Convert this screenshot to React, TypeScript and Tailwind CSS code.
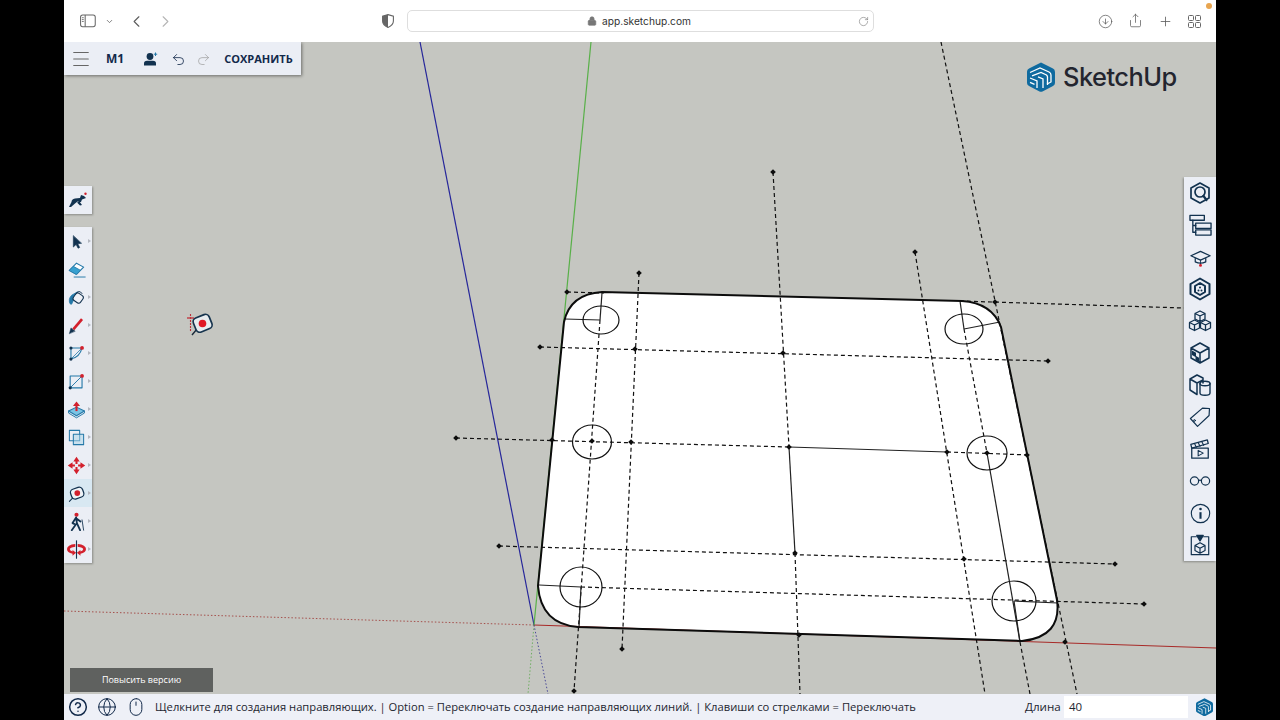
import React from "react"
import { ChevronDown, ChevronLeft, ChevronRight, CircleArrowDown, Share, Plus, RotateCw, Lock, Menu, Undo2, Redo2, CircleHelp, Globe, Mouse } from "lucide-react"

const NAVY = "#12324f"
const BLUE = "#2478a8"
const RED = "#d3202c"

type Seg = [number, number, number, number]

const GUIDES: Seg[] = [
  [567, 292, 604, 293],
  [960, 301, 1184, 308],
  [540, 347, 1048, 361],
  [456, 438, 789, 447],
  [947, 452, 1030, 455],
  [499, 546, 1115, 564],
  [581, 587, 1144, 604],
  [639, 273, 622, 649],
  [773, 172, 789, 447],
  [795, 553, 800, 694],
  [915, 252, 985, 694],
  [941, 42, 1077, 694],
  [600, 320, 574, 691],
  [964, 329, 987, 453],
  [1020, 642, 1030, 694],
]

const DOTS: [number, number][] = [
  [567, 292], [639, 273], [773, 172], [915, 252], [995, 302], [540, 347], [1048, 361], [635, 349], [783, 353],
  [456, 438], [552, 440], [592, 441], [631, 442], [789, 447], [947, 452], [987, 453], [1027, 455],
  [499, 546], [1115, 564], [795, 553], [964, 559], [1144, 604], [622, 649], [574, 691], [799, 635], [1065, 642],
]

const SOLID: Seg[] = [
  [602, 293, 600, 320], [600, 320, 565, 319],
  [960, 301, 964, 329], [964, 329, 1000, 322],
  [539, 585, 581, 587], [581, 587, 579, 627],
  [1058, 603, 1014, 601], [1014, 601, 1020, 642],
  [789, 447, 947, 452], [789, 447, 795, 553], [987, 453, 1020, 642],
]

const ELLIPSES: [number, number, number, number][] = [
  [601, 320, 18, 14], [964, 329, 19, 15], [592, 442, 19.5, 17],
  [987, 453, 20, 17], [581, 587, 21, 20], [1014, 601, 22, 20],
]

const SHAPE = "M602 292 L962 301 Q992 303 1001 327 L1057 600 Q1062 637 1022 641 L578 627 Q541 624 538 586 L564 322 Q570 294 602 292 Z"

function Drawing() {
  return (
    <svg className="absolute inset-0 w-full h-full" viewBox="64 42 1152 652">
      <line x1="64" y1="611" x2="534" y2="625" stroke="#a5504c" strokeWidth="1" strokeDasharray="1.5 2" />
      <line x1="534" y1="625" x2="528" y2="694" stroke="#6fae62" strokeWidth="1" strokeDasharray="1.5 2" />
      <line x1="534" y1="625" x2="548" y2="694" stroke="#4a4a98" strokeWidth="1" strokeDasharray="1.5 2" />
      <path d={SHAPE} fill="#ffffff" />
      <line x1="534" y1="625" x2="1216" y2="648" stroke="#a82a28" strokeWidth="1.1" />
      <line x1="420" y1="42" x2="534" y2="625" stroke="#26269a" strokeWidth="1.2" />
      <line x1="591" y1="42" x2="534" y2="625" stroke="#58b048" strokeWidth="1.2" />
      {GUIDES.map(([x1, y1, x2, y2], i) => (
        <line key={i} x1={x1} y1={y1} x2={x2} y2={y2} stroke="#111" strokeWidth="1.2" strokeDasharray="4 3" />
      ))}
      {SOLID.map(([x1, y1, x2, y2], i) => (
        <line key={i} x1={x1} y1={y1} x2={x2} y2={y2} stroke="#222" strokeWidth="1.2" />
      ))}
      {ELLIPSES.map(([cx, cy, rx, ry], i) => (
        <ellipse key={i} cx={cx} cy={cy} rx={rx} ry={ry} fill="none" stroke="#111" strokeWidth="1.2" />
      ))}
      <path d={SHAPE} fill="none" stroke="#0c0c0c" strokeWidth="2" />
      {DOTS.map(([x, y], i) => (
        <path key={i} d={`M${x} ${y - 2.8}L${x + 2.8} ${y}L${x} ${y + 2.8}L${x - 2.8} ${y}Z`} fill="#0c0c0c" />
      ))}
      <g>
        <line x1="190.5" y1="314" x2="190.5" y2="331" stroke="#c0303a" strokeWidth="1.1" strokeDasharray="2 1" />
        <line x1="187" y1="318" x2="194" y2="318" stroke="#c0303a" strokeWidth="1.3" />
        <path d="M197 329 L192 335" stroke="#1b2a3a" strokeWidth="1.4" />
        <rect x="194" y="316" width="17" height="15" rx="4" transform="rotate(-22 202 323)" fill="#e8ecef" stroke="#17344e" strokeWidth="1.7" />
        <circle cx="202.5" cy="323.5" r="3.8" fill="#e01825" />
      </g>
    </svg>
  )
}

function Logo({ size }: { size: number }) {
  return (
    <svg width={size} height={size * 1.07} viewBox="0 0 28 30">
      <path d="M14 0.5 L26 6.5 Q28 7.5 28 10 V21 Q28 23 26 24 L15.5 29.5 Q14 30 12.5 29.5 L2 24 Q0 23 0 21 V9.5 Q0 7.5 2 6.5 Z" fill="#0f6a9f" />
      <g fill="none" stroke="#ffffff" strokeWidth="1.3">
        <path d="M3 10.5 L13 6 L22 10 Q24 11 24 13 V20 L20 22" />
        <path d="M5 14 L14 10.5 L19.5 13 Q20.5 14 20.5 15 V23" />
        <path d="M3 16 L10 19 V26" />
        <path d="M3 20.5 L7.5 22.5" />
        <path d="M11 15 L16 17 V26" />
      </g>
    </svg>
  )
}

type IconProps = { children: React.ReactNode; size?: number }

function Ico({ children, size = 24 }: IconProps) {
  return (
    <svg width={size} height={size} viewBox="0 0 24 24" fill="none" stroke={NAVY} strokeWidth="1.7" strokeLinejoin="round" strokeLinecap="round">
      {children}
    </svg>
  )
}

const LEFT_TOOLS: { icon: React.ReactNode; more: boolean; active?: boolean }[] = [
  {
    more: true,
    icon: <Ico><path d="M8 5 V19 L11.5 15.7 L14 20.5 L16 19.5 L13.6 14.8 L18 14.3 Z" fill={NAVY} strokeWidth="0.8" /></Ico>,
  },
  {
    more: false,
    icon: <Ico><path d="M3 13 L12 4 L21 9 L12 18 Z" stroke={BLUE} strokeWidth="1.4" fill="#ffffff" /><path d="M3 13 L8 8 L17 13 L12 18 Z" fill="#37a0d0" stroke={BLUE} strokeWidth="1" /><path d="M9 21.5 H23" stroke={BLUE} strokeWidth="1.2" /></Ico>,
  },
  {
    more: true,
    icon: <Ico><path d="M13 5 L6 9 Q1 14 4 20 Q6 22 7 18 L9 13 Z" fill={BLUE} stroke={BLUE} strokeWidth="1" /><rect x="9" y="7" width="11" height="11" rx="3" transform="rotate(35 14 12)" fill="#eef0f6" strokeWidth="1.3" /><path d="M11 8 Q15 1 19 7" strokeWidth="1.2" /></Ico>,
  },
  {
    more: true,
    icon: <Ico><path d="M8 17 L19 4" stroke={RED} strokeWidth="3.4" strokeLinecap="butt" /><path d="M3 22 L5 15 L10 19 Z" fill={NAVY} strokeWidth="0.6" /></Ico>,
  },
  {
    more: true,
    icon: <Ico><path d="M5 5 H18 M5 5 V19" stroke={BLUE} strokeWidth="1.4" /><path d="M5 19 Q16 17 19 5" stroke={BLUE} strokeWidth="1.4" /><path d="M5 19 L19 5" stroke={BLUE} strokeWidth="1" /><circle cx="5" cy="5" r="2" fill={NAVY} stroke="none" /><circle cx="5" cy="19" r="2" fill={NAVY} stroke="none" /><circle cx="19" cy="5" r="2.4" fill={RED} stroke="none" /></Ico>,
  },
  {
    more: true,
    icon: <Ico><rect x="4" y="5" width="15" height="15" stroke={BLUE} strokeWidth="1.4" /><path d="M4 20 L19 5" stroke={BLUE} strokeWidth="1.2" /><circle cx="4" cy="20" r="2" fill={NAVY} stroke="none" /><circle cx="19" cy="5" r="2.4" fill={RED} stroke="none" /></Ico>,
  },
  {
    more: true,
    icon: <Ico><path d="M2 14 L12 9 L22 14 L12 20 Z" fill="#7cc4e4" stroke={BLUE} strokeWidth="1.4" /><path d="M2 14 V16.5 L12 22.5 L22 16.5 V14" stroke={BLUE} strokeWidth="1.2" /><path d="M12 14 V6" stroke={RED} strokeWidth="2.6" strokeLinecap="butt" /><path d="M7.5 7.5 L12 2 L16.5 7.5 Z" fill={RED} stroke="none" /></Ico>,
  },
  {
    more: true,
    icon: <Ico><rect x="3" y="3" width="13" height="13" stroke={BLUE} strokeWidth="1.3" /><rect x="8" y="8" width="13" height="13" stroke={BLUE} strokeWidth="1.3" fill="#a9d3e8" fillOpacity="0.5" /></Ico>,
  },
  {
    more: true,
    icon: <Ico><g fill={RED} stroke="none"><path d="M12 1 L16 7 H13.3 V10 H10.7 V7 H8 Z" /><path d="M12 23 L16 17 H13.3 V14 H10.7 V17 H8 Z" /><path d="M1 12 L7 8 V10.7 H10 V13.3 H7 V16 Z" /><path d="M23 12 L17 8 V10.7 H14 V13.3 H17 V16 Z" /></g></Ico>,
  },
  {
    more: true,
    active: true,
    icon: <Ico><path d="M8 17 L3 22" strokeWidth="1.3" /><rect x="5" y="5" width="16" height="13" rx="4.5" transform="rotate(-20 13 12)" fill="#eef3f7" strokeWidth="1.6" /><circle cx="13" cy="11.5" r="3.6" fill={RED} stroke="none" /></Ico>,
  },
  {
    more: true,
    icon: <Ico><circle cx="12" cy="3.5" r="2.6" fill={RED} stroke="none" /><path d="M11.5 7 L7 14 L9 15 M11.5 7 L12.5 14 L6 23 M12.5 14 L16.5 23 M11.5 8 L17 12" strokeWidth="2.3" /><path d="M19 10 L21 23" strokeWidth="1.1" /></Ico>,
  },
  {
    more: true,
    icon: <Ico><path d="M12 1 V23" strokeWidth="1.4" /><path d="M10.5 5 Q0 6 0 11.5 Q0 16 7 17.5 V20 L11.5 16 L7 12.5 V14.5 Q3.5 13.5 3.5 11.5 Q3.5 9.5 10.5 8.5 Z" fill={RED} stroke="none" /><path d="M13.5 5 Q24 6 24 11.5 Q24 16 17 17.5 V20 L12.5 16 L17 12.5 V14.5 Q20.5 13.5 20.5 11.5 Q20.5 9.5 13.5 8.5 Z" fill={RED} stroke="none" /></Ico>,
  },
]

const RIGHT_TOOLS: React.ReactNode[] = [
  <Ico key="a"><path d="M12 2 L21 7 V17 L12 22 L3 17 V7 Z" /><circle cx="12" cy="11" r="5" /><path d="M15.5 15 L18.5 19" strokeWidth="2.2" /></Ico>,
  <Ico key="b" size={23}><rect x="1" y="1.5" width="15" height="5" strokeWidth="1.4" /><rect x="7" y="9.5" width="16" height="5.5" strokeWidth="1.4" /><rect x="7" y="16.5" width="16" height="5.5" strokeWidth="1.4" /><path d="M4 6.5 V19 H7 M4 12 H7" strokeWidth="1.4" /></Ico>,
  <Ico key="c" size={21}><path d="M12 5 L23 10 L12 15 L1 10 Z" strokeWidth="1.4" /><path d="M6 13 V17 Q12 20 18 17 V13" strokeWidth="1.4" /><path d="M12 15 V20" strokeWidth="1" /><circle cx="12" cy="21" r="1.7" fill={RED} stroke="none" /></Ico>,
  <Ico key="d"><path d="M12 1.5 L21.5 7 V17 L12 22.5 L2.5 17 V7 Z" strokeWidth="2" /><path d="M12 6 L17 9 V15 L12 18 L7 15 V9 Z" strokeWidth="2" /><circle cx="10.5" cy="13.5" r="1" fill={NAVY} stroke="none" /><circle cx="13.5" cy="13.5" r="1" fill={NAVY} stroke="none" /><circle cx="12" cy="10.5" r="1" fill={NAVY} stroke="none" /></Ico>,
  <Ico key="e"><path d="M12 2 L17 4.5 V10 L12 12.5 L7 10 V4.5 Z M7 4.5 L12 7 L17 4.5 M12 7 V12.5" strokeWidth="1.3" /><path d="M6.5 11 L11.5 13.5 V19 L6.5 21.5 L1.5 19 V13.5 Z M1.5 13.5 L6.5 16 L11.5 13.5 M6.5 16 V21.5" strokeWidth="1.3" /><path d="M17.5 11 L22.5 13.5 V19 L17.5 21.5 L12.5 19 V13.5 Z M12.5 13.5 L17.5 16 L22.5 13.5 M17.5 16 V21.5" strokeWidth="1.3" /></Ico>,
  <Ico key="f"><path d="M12 2 L21 7 V17 L12 22 L3 17 V7 Z M3 7 L12 12 L21 7 M12 12 V22" strokeWidth="1.5" /><path d="M4 9.5 L8 11.8 V15 L11 16.7 V21 L7.5 19 V16 L4 14 Z" fill={NAVY} stroke="none" /></Ico>,
  <Ico key="g"><path d="M9 2 L15 5 V10 M9 2 L2 6 V17 L9 21.5 M2 6 L9 10 V21.5 M9 10 L15 7" strokeWidth="1.5" /><ellipse cx="17" cy="10.5" rx="5" ry="2.2" strokeWidth="1.4" /><path d="M12 10.5 V20 Q12 22.2 17 22.2 Q22 22.2 22 20 V10.5" strokeWidth="1.4" /></Ico>,
  <Ico key="h"><path d="M14 3 H21 V10 L10 21.5 L2.5 14 Z" strokeWidth="1.2" transform="rotate(3 12 12)" /><circle cx="6.5" cy="15.5" r="0.9" strokeWidth="1" /></Ico>,
  <Ico key="i" size={22}><path d="M3 11 H21 V22 H3 Z" strokeWidth="1.4" /><path d="M2 7 L20 2 L21 6 L3 11 Z" strokeWidth="1.4" /><path d="M6 6 L8 10 M10 5 L12 9 M14 4 L16 8" strokeWidth="1.2" /><path d="M10 13.5 L15.5 16.5 L10 19.5 Z" strokeWidth="1.2" /></Ico>,
  <Ico key="j" size={22}><circle cx="6" cy="12" r="4.5" strokeWidth="1.3" /><circle cx="18" cy="12" r="4.5" strokeWidth="1.3" /><path d="M10.5 11.5 Q12 10.5 13.5 11.5" strokeWidth="1.3" /></Ico>,
  <Ico key="k" size={21}><circle cx="12" cy="12" r="10.5" strokeWidth="1.3" /><path d="M12 10.5 V18" strokeWidth="2.4" strokeLinecap="butt" /><circle cx="12" cy="6.8" r="1.5" fill={NAVY} stroke="none" /></Ico>,
  <Ico key="l" size={22}><path d="M8 3 H2.5 V22.5 H21.5 V3 H16" strokeWidth="1.3" /><path d="M8.5 1.5 H15.5 L12 7.5 Z" strokeWidth="1.5" fill={NAVY} /><path d="M12 9.5 L17.5 12.5 V18 L12 21 L6.5 18 V12.5 Z M6.5 12.5 L12 15.5 L17.5 12.5 M12 15.5 V21" strokeWidth="1.3" /></Ico>,
]

function BrowserBar() {
  return (
    <header className="flex h-[42px] shrink-0 items-center bg-white text-[#5c5c5c]">
      <svg className="ml-[16px]" width="16" height="14" viewBox="0 0 17 14" fill="none" stroke="#666" strokeWidth="1.1">
        <rect x="0.6" y="0.6" width="15.6" height="12.4" rx="2.2" />
        <path d="M5.5 0.6 V13" />
        <path d="M2 3.5 H4 M2 5.5 H4 M2 7.5 H4" strokeWidth="0.9" />
      </svg>
      <ChevronDown className="ml-[9px]" size={9} strokeWidth={2} />
      <ChevronLeft className="ml-[13px]" size={19} strokeWidth={1.4} />
      <ChevronRight className="ml-[10px] text-[#b5b5b5]" size={19} strokeWidth={1.4} />
      <svg className="ml-[207px]" width="12" height="14" viewBox="0 0 12 14">
        <path d="M6 0.6 L11.4 2.2 V7 Q11.4 11 6 13.4 Q0.6 11 0.6 7 V2.2 Z" fill="#fff" stroke="#666" strokeWidth="1.1" />
        <path d="M6 0.6 L0.6 2.2 V7 Q0.6 11 6 13.4 Z" fill="#666" />
      </svg>
      <div className="ml-[13px] flex h-[22px] w-[467px] items-center rounded-[5px] border border-[#dedede] pr-[4px]">
        <div className="flex flex-1 items-center justify-center pl-[12px]">
          <Lock size={10} fill="#777" stroke="#777" strokeWidth={1.8} />
          <span className="ml-[5px] pt-px font-['Inter',sans-serif] text-[10.2px] text-[#333]">app.sketchup.com</span>
        </div>
        <RotateCw size={11} strokeWidth={1.3} className="text-[#777]" />
      </div>
      <CircleArrowDown className="ml-[224px]" size={15} strokeWidth={1.2} />
      <Share className="ml-[15px] mb-[2px]" size={15} strokeWidth={1.2} />
      <Plus className="ml-[15px]" size={15} strokeWidth={1.3} />
      <svg className="ml-[15px]" width="13" height="13" viewBox="0 0 13 13" fill="none" stroke="#666" strokeWidth="1">
        <rect x="0.5" y="0.5" width="5" height="5" rx="1" />
        <rect x="7.5" y="0.5" width="5" height="5" rx="1" />
        <rect x="0.5" y="7.5" width="5" height="5" rx="1" />
        <rect x="7.5" y="7.5" width="5" height="5" rx="1" />
      </svg>
    </header>
  )
}

function TopToolbar() {
  return (
    <div className="absolute left-0 top-0 flex h-[33px] w-[237px] items-center bg-[#ebeef5] pt-px text-[#12294a] shadow-[1px_1px_3px_rgba(0,0,0,0.45)] font-['Open_Sans',sans-serif] text-[11px] font-bold">
      <Menu className="ml-[6px] text-[#666]" size={22} strokeWidth={1.1} />
      <span className="ml-[14px] text-[12px]">M1</span>
      <svg className="ml-[20px]" width="14" height="14" viewBox="0 0 14 14">
        <circle cx="6" cy="4.5" r="3.4" fill={NAVY} />
        <path d="M0 13.5 V11.5 Q0 8.8 3 8.8 H9 Q12 8.8 12 11.5 V13.5 Z" fill={NAVY} />
        <path d="M11.5 0.5 V4 M9.8 2.2 H13.2" stroke={BLUE} strokeWidth="1" />
      </svg>
      <Undo2 className="ml-[13px]" size={15} strokeWidth={1.3} />
      <Redo2 className="ml-[10px] text-[#9a9a9a]" size={15} strokeWidth={1.1} />
      <span className="ml-[13px]">СОХРАНИТЬ</span>
    </div>
  )
}

function LeftToolbars() {
  return (
    <div className="absolute left-0 top-[144px] flex w-[28px] flex-col gap-[13px]">
      <div className="flex h-[28px] items-center justify-center bg-[#ebeef5] shadow-[1px_1px_2px_rgba(0,0,0,0.3)]">
        <svg width="20" height="16" viewBox="0 0 20 16">
          <path d="M1 15 L3.5 10 Q3.5 7 7 6.5 L12 6 L13 3 L16 4 L18 6 L14 7.5 L13 10 L9.5 9.5 L7 11.5 L3 15 Z M11.5 9.5 L14 13 L12 13.5 L9 10.5 Z" fill={NAVY} />
          <circle cx="17.5" cy="1.8" r="1.2" fill={RED} />
        </svg>
      </div>
      <div className="flex flex-col bg-[#ebeef5] shadow-[1px_1px_2px_rgba(0,0,0,0.3)]">
        {LEFT_TOOLS.map((tool, i) => (
          <div key={i} className={`relative flex h-[28px] items-center justify-center pr-[3px] ${tool.active ? "bg-[#d8e8f2]" : ""}`}>
            <div className="flex items-center justify-center [&>svg]:h-[19px] [&>svg]:w-[19px]">{tool.icon}</div>
            {tool.more && (
              <span className="absolute right-[1px] top-[12px] h-0 w-0 border-y-[2.5px] border-l-[3px] border-y-transparent border-l-[#b4b8c0]" />
            )}
          </div>
        ))}
      </div>
    </div>
  )
}

function RightToolbar() {
  return (
    <div className="absolute right-0 top-[135px] flex w-[32px] flex-col bg-[#ebeef5] shadow-[-1px_1px_2px_rgba(0,0,0,0.3)]">
      {RIGHT_TOOLS.map((icon, i) => (
        <div key={i} className="flex h-[32px] items-center justify-center">{icon}</div>
      ))}
    </div>
  )
}

function StatusBar() {
  return (
    <footer className="flex h-[26px] shrink-0 items-center bg-[#eef0f7] text-[#1d2530] font-['Open_Sans',sans-serif] text-[11.2px]">
      <CircleHelp className="ml-[4px] text-[#12294a]" size={20} strokeWidth={1.8} />
      <Globe className="ml-[9px] text-[#12294a]" size={20} strokeWidth={1.2} />
      <Mouse className="ml-[9px] text-[#12294a]" size={20} strokeWidth={1.2} />
      <span className="ml-[9px] w-[870px] shrink-0 whitespace-nowrap">Щелкните для создания направляющих. | Option = Переключать создание направляющих линий. | Клавиши со стрелками = Переключать</span>
      <span className="w-[36px] shrink-0 text-[11.6px]">Длина</span>
      <div className="ml-[3px] flex h-[22px] w-[124px] shrink-0 items-center bg-white pl-[5px] text-[11.5px]">40</div>
      <div className="ml-[8px] shrink-0"><Logo size={17} /></div>
    </footer>
  )
}

export default function App() {
  return (
    <div className="relative flex h-screen w-full justify-center overflow-hidden bg-black">
      <div className="flex w-[1152px] flex-col">
        <BrowserBar />
        <main className="relative flex-1 overflow-hidden bg-[#c5c6c1]">
          <Drawing />
          <TopToolbar />
          <div className="absolute left-[963px] top-[20px] flex items-center gap-[8px]">
            <Logo size={28} />
            <span className="font-['Inter',sans-serif] text-[25.4px] leading-[30px] font-medium tracking-[-0.5px] text-[#23252f]">SketchUp</span>
          </div>
          <LeftToolbars />
          <RightToolbar />
          <button className="absolute bottom-[2px] left-[6px] h-[24px] w-[143px] bg-[#5f615f] font-['Open_Sans',sans-serif] text-[9px] text-white">Повысить версию</button>
        </main>
        <StatusBar />
      </div>
      <span className="absolute left-[1206px] top-[3px] h-[6px] w-[6px] rounded-full bg-[#e8a550]" />
    </div>
  )
}
